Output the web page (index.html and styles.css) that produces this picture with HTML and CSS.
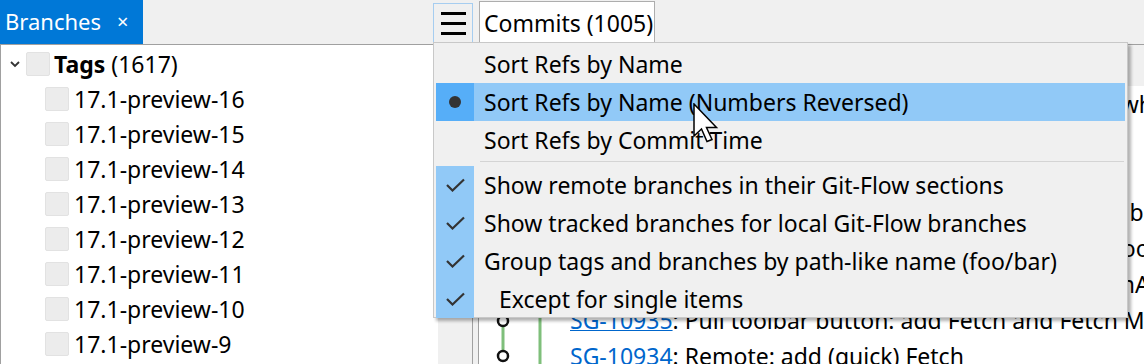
FILE: index.html
```html
<!DOCTYPE html>
<html>
<head>
<meta charset="utf-8">
<link rel="stylesheet" href="styles.css">
</head>
<body>
<div class="app">
  <div class="topbar">
    <div class="tab-branches"><span class="tab-title">Branches</span><span class="tab-close">×</span></div>
    <div class="top-spacer"></div>
    <div class="menu-btn"><span class="bars"><i></i><i></i><i></i></span></div>
    <div class="tab-commits">Commits (1005)</div>
  </div>
  <div class="main">
    <div class="branches">
      <div class="row root">
        <svg class="chev" width="20" height="10" viewBox="0 0 20 10"><path d="M5 3 L9 7 L13 3" fill="none" stroke="#333" stroke-width="1.8"/></svg>
        <span class="cb"></span><span class="label"><b>Tags</b> (1617)</span>
      </div>
      <div class="row child"><span class="cb"></span><span class="label">17.1-preview-16</span></div>
      <div class="row child"><span class="cb"></span><span class="label">17.1-preview-15</span></div>
      <div class="row child"><span class="cb"></span><span class="label">17.1-preview-14</span></div>
      <div class="row child"><span class="cb"></span><span class="label">17.1-preview-13</span></div>
      <div class="row child"><span class="cb"></span><span class="label">17.1-preview-12</span></div>
      <div class="row child"><span class="cb"></span><span class="label">17.1-preview-11</span></div>
      <div class="row child"><span class="cb"></span><span class="label">17.1-preview-10</span></div>
      <div class="row child"><span class="cb"></span><span class="label">17.1-preview-9</span></div>
    </div>
    <div class="gutter"><div class="gutter-inner"></div></div>
    <div class="commits">
      <div class="commits-head"></div>
      <div class="commit-list">
        <svg class="graph" width="91" height="300" viewBox="0 0 91 300">
          <line x1="61" y1="0" x2="61" y2="300" stroke="#7fbf7b" stroke-width="3"/>
          <line x1="24" y1="0" x2="24" y2="272" stroke="#7fbf7b" stroke-width="3"/>
          <circle cx="24" cy="235" r="5" fill="#fff" stroke="#111" stroke-width="2.5"/>
          <circle cx="24" cy="270" r="5" fill="#fff" stroke="#111" stroke-width="2.5"/>
        </svg>
        <div class="messages">
          <div class="msg"><a>SG-10941</a>: Branches view: sorts numbers reversed, which is new</div>
          <div class="msg"><a>SG-10940</a>: Refs: sort by name</div>
          <div class="msg"><a>SG-10939</a>: Log: show tags</div>
          <div class="msg"><a>SG-10938</a>: Branches view: show Git-Flow sections at bottom</div>
          <div class="msg"><a>SG-10937</a>: Branches view: tracked branches would look local</div>
          <div class="msg"><a>SG-10936</a>: Branches view: group by path-like in mainArea</div>
          <div class="msg"><a>SG-10935</a>: Pull toolbar button: add Fetch and Fetch More</div>
          <div class="msg"><a>SG-10934</a>: Remote: add (quick) Fetch</div>
        </div>
      </div>
    </div>
  </div>

  <div class="menu">
    <div class="mi"><span class="ic"></span><span class="mt">Sort Refs by Name</span></div>
    <div class="mi sel"><span class="ic"><span class="dot"></span></span><span class="mt">Sort Refs by Name (Numbers Reversed)</span></div>
    <div class="mi"><span class="ic"></span><span class="mt">Sort Refs by Commit Time</span></div>
    <div class="sep"></div>
    <div class="mi chk"><span class="ic"><svg width="20" height="14" viewBox="0 0 20 14"><path d="M2 7 L7.5 12.5 L19 1.5" fill="none" stroke="#333" stroke-width="2.2"/></svg></span><span class="mt">Show remote branches in their Git-Flow sections</span></div>
    <div class="mi chk"><span class="ic"><svg width="20" height="14" viewBox="0 0 20 14"><path d="M2 7 L7.5 12.5 L19 1.5" fill="none" stroke="#333" stroke-width="2.2"/></svg></span><span class="mt">Show tracked branches for local Git-Flow branches</span></div>
    <div class="mi chk"><span class="ic"><svg width="20" height="14" viewBox="0 0 20 14"><path d="M2 7 L7.5 12.5 L19 1.5" fill="none" stroke="#333" stroke-width="2.2"/></svg></span><span class="mt">Group tags and branches by path-like name (foo/bar)</span></div>
    <div class="mi chk"><span class="ic"><svg width="20" height="14" viewBox="0 0 20 14"><path d="M2 7 L7.5 12.5 L19 1.5" fill="none" stroke="#333" stroke-width="2.2"/></svg></span><span class="mt indent">Except for single items</span></div>
  </div>

  <svg class="cursor" width="30" height="42" viewBox="0 0 30 42">
    <path d="M1 1 L1 33 L8.5 26 L14 38.5 L19 36.5 L13.5 24.5 L23.5 24.5 Z" fill="#fff" stroke="#000" stroke-width="1.5" stroke-linejoin="miter"/>
  </svg>
</div>
</body>
</html>
```

FILE: styles.css
```css
html, body {
  margin: 0;
  padding: 0;
}
body {
  width: 1144px;
  height: 364px;
  overflow: hidden;
  background: #f0f0f0;
  font-family: "Noto Sans", "Open Sans", sans-serif;
  font-size: 23px;
  color: #000;
}
.app {
  position: relative;
  width: 1144px;
  height: 364px;
  overflow: hidden;
}

/* top bar */
.topbar {
  display: flex;
  align-items: flex-start;
  height: 44px;
  border-bottom: 1px solid #a0a0a0;
  background: #f0f0f0;
}
.tab-branches {
  width: 143px;
  height: 44px;
  background: #0078d7;
  color: #fff;
  display: flex;
  align-items: center;
  box-sizing: border-box;
  padding-left: 5px;
  font-size: 22px;
}
.tab-title {
  line-height: 1;
  margin-top: -2px;
}
.tab-close {
  font-size: 20px;
  margin-left: 16px;
  margin-top: -2px;
}
.top-spacer {
  width: 290px;
}
.menu-btn {
  width: 40px;
  height: 40px;
  margin-top: 3px;
  box-sizing: border-box;
  border: 1px solid #a6cdf0;
  border-bottom: none;
  display: flex;
  justify-content: center;
  padding-top: 8px;
}
.bars {
  display: flex;
  flex-direction: column;
  gap: 7px;
}
.bars i {
  display: block;
  width: 25px;
  height: 3px;
  background: #000;
}
.tab-commits {
  margin-left: 6px;
  margin-top: 1px;
  width: 176px;
  height: 42px;
  box-sizing: border-box;
  background: #fff;
  border: 1px solid #adadad;
  border-bottom: none;
  padding-left: 4px;
  line-height: 42px;
}

/* main */
.main {
  display: flex;
  height: 319px;
}
.branches {
  width: 438px;
  box-sizing: border-box;
  border-left: 1px solid #a0a0a0;
  background: #fff;
  padding-top: 1px;
}
.row {
  height: 35px;
  display: flex;
  align-items: center;
  white-space: nowrap;
}
.row.root {
  padding-left: 5px;
}
.chev {
  display: block;
  width: 20px;
  height: 10px;
}
.cb {
  width: 22px;
  height: 22px;
  border: 1px solid #e2e2e2;
  background: #ececec;
  border-radius: 2px;
  flex: none;
}
.row.root .cb {
  margin-right: 4px;
}
.row.child {
  padding-left: 44px;
}
.row.child .cb {
  margin-right: 5px;
}
.label b {
  font-weight: 700;
}

.gutter {
  width: 41px;
  box-sizing: border-box;
  border-right: 1px solid #a0a0a0;
  background: #f0f0f0;
}
.gutter-inner {
  width: 34px;
  height: 100%;
  border-right: 1px solid #a0a0a0;
}

.commits {
  flex: 1;
  display: flex;
  flex-direction: column;
  background: #fff;
  min-width: 0;
}
.commits-head {
  height: 41px;
  flex: none;
  background: #f0f0f0;
}
.commit-list {
  display: flex;
  flex: 1;
  min-height: 0;
}
.graph {
  display: block;
  flex: none;
}
.messages {
  flex: 1;
  min-width: 0;
}
.msg {
  height: 36px;
  line-height: 36px;
  white-space: nowrap;
  overflow: hidden;
}
.msg a {
  color: #0066cc;
  text-decoration: underline;
  text-decoration-thickness: 1px;
}

/* context menu */
.menu {
  position: absolute;
  left: 433px;
  top: 42px;
  width: 695px;
  height: 276px;
  box-sizing: border-box;
  border: 1px solid #c8c8c8;
  background: #f0f0f0;
  padding: 2px;
  box-shadow: 3px 3px 3px rgba(0, 0, 0, 0.3);
}
.mi {
  height: 38px;
  display: flex;
  align-items: center;
  white-space: nowrap;
}
.ic {
  width: 38px;
  height: 38px;
  display: flex;
  align-items: center;
  justify-content: center;
  flex: none;
}
.mt {
  padding-left: 10px;
}
.mt.indent {
  padding-left: 25px;
}
.mi.sel {
  background: #91c9f7;
}
.mi.sel .ic {
  background: #56aef8;
}
.mi.chk .ic {
  background: #91c9f7;
}
.dot {
  width: 12px;
  height: 12px;
  border-radius: 50%;
  background: #333;
}
.sep {
  height: 7px;
  box-sizing: border-box;
  margin-left: 44px;
  margin-right: 1px;
  border-bottom: 4px solid #f0f0f0;
  background: #d4d4d4;
  border-top: 2px solid #f0f0f0;
}

.cursor {
  position: absolute;
  left: 693px;
  top: 103px;
}
```
